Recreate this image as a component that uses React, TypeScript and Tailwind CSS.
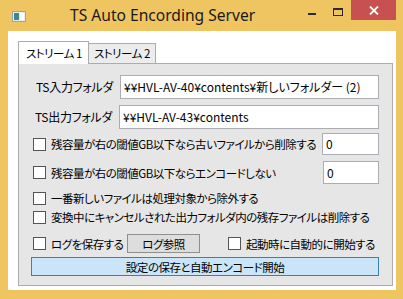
const Check = () => (
  <div className="w-[13px] h-[13px] border border-[#555555] bg-white shrink-0" />
);

const TextBox = ({ value, className }: { value: string; className?: string }) => (
  <div className={`h-full border border-[#abadb3] bg-white flex items-center pl-[3px] text-[12px] tracking-normal leading-none whitespace-nowrap overflow-hidden ${className ?? ''}`}>
    {value}
  </div>
);

const AppIcon = () => (
  <svg width="14" height="11" viewBox="0 0 14 11" className="shrink-0">
    <rect x="0.5" y="0.5" width="13" height="10" fill="#e8eef0" stroke="#9aa4a8" />
    <rect x="2" y="2" width="5" height="7" fill="#3b8a86" />
    <rect x="8" y="2" width="4" height="7" fill="#ffffff" />
  </svg>
);

export default function App() {
  return (
    <div className="w-[403px] h-[299px] bg-[#efc562] flex flex-col overflow-hidden text-black font-['Noto_Sans_CJK_JP',sans-serif] [font-feature-settings:'palt'] text-[11.5px] tracking-[-0.5px] leading-[16px]">
      {/* タイトルバー */}
      <div className="h-[31px] shrink-0 flex items-start pr-[7px]">
        <div className="pl-[12px] pt-[11px]">
          <AppIcon />
        </div>
        <div className="ml-[44px] pt-[5px] text-[15.6px] tracking-normal leading-[20px] font-['Noto_Sans',sans-serif] text-[#1a1a1a] whitespace-nowrap">
          TS Auto Encording Server
        </div>
        <div className="ml-auto flex items-start">
          <div className="w-[26px] h-[20px] flex items-center justify-center">
            <div className="w-[8px] h-[2px] bg-[#2b2b2b] mt-[7px]" />
          </div>
          <div className="w-[26px] h-[20px] flex items-start justify-center pt-[8px]">
            <div className="w-[10px] h-[8px] border border-[#2b2b2b] border-t-2" />
          </div>
          <div className="w-[45px] h-[20px] bg-[#c75050] flex items-center justify-center">
            <svg width="10" height="9" viewBox="0 0 10 9">
              <path d="M1 0.5 L9 8.5 M9 0.5 L1 8.5" stroke="#ffffff" strokeWidth="1.8" />
            </svg>
          </div>
        </div>
      </div>

      {/* クライアント領域 */}
      <div className="flex-1 ml-[8px] mr-[7px] mb-[9px] bg-white pt-[10px] pl-[10px] pr-[3px] pb-[4px] flex flex-col">
        {/* タブ */}
        <div className="flex items-start h-[22px] shrink-0">
          <div className="relative z-10 w-[71px] h-[23px] bg-white border border-b-0 border-[#acacac] pl-[7px] pt-[3px] whitespace-nowrap">
            ストリーム 1
          </div>
          <div className="mt-[2px] w-[67px] h-[20px] bg-[#ececec] border-t border-r border-[#acacac] pl-[5px] pt-[1px] whitespace-nowrap">
            ストリーム 2
          </div>
        </div>

        {/* タブページ */}
        <div className="flex-1 border border-[#acacac] bg-[#e6e6e6] flex flex-col pr-[13px]">
          <div className="mt-[11px] h-[24px] flex items-center pl-[17px]">
            <div className="w-[84px] shrink-0 whitespace-nowrap text-[12px] tracking-[-0.3px]">TS入力フォルダ</div>
            <div className="flex-1 h-full">
              <TextBox value="¥¥HVL-AV-40¥contents¥新しいフォルダー (2)" />
            </div>
          </div>
          <div className="mt-[6px] h-[24px] flex items-center pl-[16px]">
            <div className="w-[84px] shrink-0 whitespace-nowrap text-[12px] tracking-[-0.3px]">TS出力フォルダ</div>
            <div className="flex-1 h-full">
              <TextBox value="¥¥HVL-AV-43¥contents" />
            </div>
          </div>
          <div className="mt-[4px] h-[22px] flex items-center pl-[14px]">
            <Check />
            <div className="ml-[5px] flex-1 min-w-0 whitespace-nowrap">残容量が右の閾値GB以下なら古いファイルから削除する</div>
            <div className="w-[57px] h-full shrink-0">
              <TextBox value="0" />
            </div>
          </div>
          <div className="mt-[6px] h-[23px] flex items-center pl-[14px]">
            <Check />
            <div className="ml-[5px] flex-1 min-w-0 whitespace-nowrap">残容量が右の閾値GB以下ならエンコードしない</div>
            <div className="w-[56px] h-full shrink-0">
              <TextBox value="0" />
            </div>
          </div>
          <div className="mt-[6px] h-[16px] flex items-center pl-[14px]">
            <Check />
            <div className="ml-[5px] whitespace-nowrap">一番新しいファイルは処理対象から除外する</div>
          </div>
          <div className="mt-[3px] h-[16px] flex items-center pl-[14px]">
            <Check />
            <div className="ml-[5px] whitespace-nowrap">変換中にキャンセルされた出力フォルダ内の残存ファイルは削除する</div>
          </div>
          <div className="mt-[9px] h-[19px] flex items-center pl-[14px]">
            <Check />
            <div className="ml-[5px] w-[76px] shrink-0 whitespace-nowrap">ログを保存する</div>
            <div className="w-[73px] h-full shrink-0 bg-[#dddddd] border border-[#8f8f8f] flex items-center justify-center">
              ログ参照
            </div>
            <div className="ml-[28px]">
              <Check />
            </div>
            <div className="ml-[5px] whitespace-nowrap">起動時に自動的に開始する</div>
          </div>
          <div className="mt-[4px] h-[19px] ml-[12px] bg-[#c9e5f7] border border-[#3c7fb1] flex items-center justify-center">
            設定の保存と自動エンコード開始
          </div>
        </div>
      </div>
    </div>
  );
}
